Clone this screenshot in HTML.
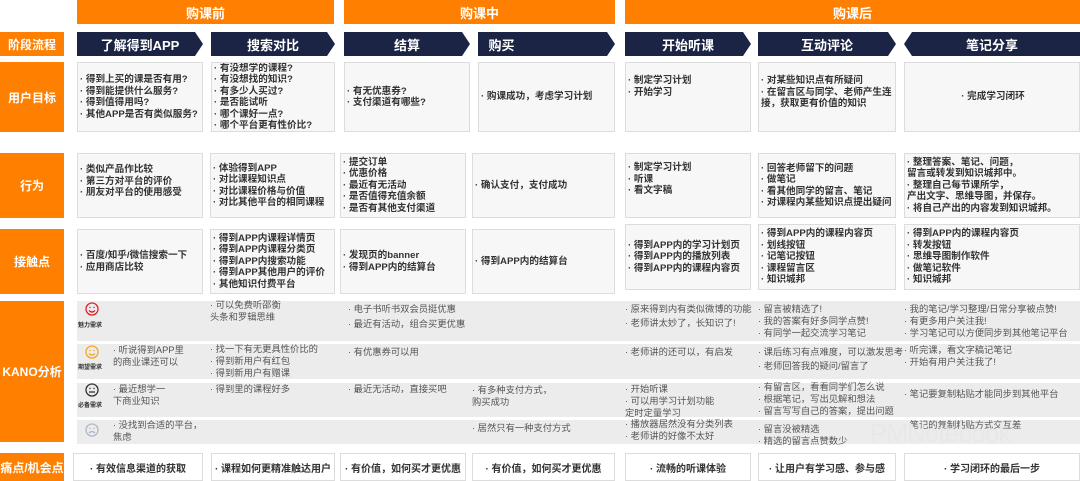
<!DOCTYPE html>
<html><head><meta charset="utf-8"><style>
*{margin:0;padding:0;box-sizing:border-box}
body{width:1080px;height:481px;background:#fff;position:relative;overflow:hidden;font-family:"Liberation Sans","Noto Sans CJK SC",sans-serif}
.a{position:absolute}
.top{background:#ff7f00;color:#fff;font-weight:bold;font-size:13px;display:flex;align-items:center;justify-content:center;top:0;height:24px}
.lab{background:#ff7f00;color:#fff;font-weight:bold;font-size:12px;display:flex;align-items:center;justify-content:center;left:0;width:64px;white-space:nowrap}
.st{background:#1b2444;color:#fff;font-weight:bold;font-size:13px;display:flex;align-items:center;justify-content:center;top:32px;height:24px;clip-path:polygon(0 0,calc(100% - 8px) 0,100% 50%,calc(100% - 8px) 100%,0 100%)}
.c{background:#f7f7f7;border:1px solid #dcdcdc;font-size:9.6px;font-weight:bold;color:#333;line-height:11.5px;display:flex;flex-direction:column;justify-content:center;padding-left:2px;white-space:nowrap;overflow:hidden}
.k{background:#ececec;left:77px;width:1003px}
.t{font-size:9.3px;color:#555;line-height:12px;white-space:nowrap}
.p{background:#fff;border:1px solid #dcdcdc;font-size:10px;font-weight:bold;color:#333;display:flex;align-items:center;justify-content:center;top:453px;height:28px;white-space:nowrap}
</style></head><body>
<div class="a top" style="left:77px;width:257px">购课前</div>
<div class="a top" style="left:344px;width:271px">购课中</div>
<div class="a top" style="left:625px;width:455px">购课后</div>

<div class="a lab" style="top:32px;height:24px">阶段流程</div>
<div class="a st" style="left:77px;width:126px">了解得到APP</div>
<div class="a st" style="left:211px;width:124px">搜索对比</div>
<div class="a st" style="left:344px;width:126px">结算</div>
<div class="a st" style="left:478px;width:137px;padding-right:90px">购买</div>
<div class="a st" style="left:625px;width:126px">开始听课</div>
<div class="a st" style="left:758px;width:138px">互动评论</div>
<div class="a st" style="left:904px;width:176px;clip-path:polygon(8px 0,100% 0,100% 100%,8px 100%,0 50%)">笔记分享</div>

<div class="a lab" style="top:62px;height:70px">用户目标</div>
<div class="a c" style="left:77px;top:62px;width:126px;height:70px">· 得到上买的课是否有用?<br>· 得到能提供什么服务?<br>· 得到值得用吗?<br>· 其他APP是否有类似服务?</div>
<div class="a c" style="left:211px;top:62px;width:124px;height:70px">· 有没想学的课程?<br>· 有没想找的知识?<br>· 有多少人买过?<br>· 是否能试听<br>· 哪个课好一点?<br>· 哪个平台更有性价比?</div>
<div class="a c" style="left:344px;top:62px;width:126px;height:70px">· 有无优惠券?<br>· 支付渠道有哪些?</div>
<div class="a c" style="left:478px;top:62px;width:137px;height:70px">· 购课成功，考虑学习计划</div>
<div class="a c" style="left:625px;top:62px;width:126px;height:70px;justify-content:flex-start;padding-top:12px">· 制定学习计划<br>· 开始学习</div>
<div class="a c" style="left:758px;top:62px;width:138px;height:70px;justify-content:flex-start;padding-top:12px">· 对某些知识点有所疑问<br>· 在留言区与同学、老师产生连<br>接，获取更有价值的知识</div>
<div class="a c" style="left:904px;top:62px;width:176px;height:70px;align-items:center">· 完成学习闭环</div>

<div class="a lab" style="top:153px;height:65px">行为</div>
<div class="a c" style="left:77px;top:153px;width:126px;height:65px;justify-content:flex-start;padding-top:10px">· 类似产品作比较<br>· 第三方对平台的评价<br>· 朋友对平台的使用感受</div>
<div class="a c" style="left:210px;top:153px;width:125px;height:65px">· 体验得到APP<br>· 对比课程知识点<br>· 对比课程价格与价值<br>· 对比其他平台的相同课程</div>
<div class="a c" style="left:340px;top:153px;width:126px;height:65px">· 提交订单<br>· 优惠价格<br>· 最近有无活动<br>· 是否值得充值余额<br>· 是否有其他支付渠道</div>
<div class="a c" style="left:472px;top:153px;width:143px;height:65px">· 确认支付，支付成功</div>
<div class="a c" style="left:625px;top:153px;width:126px;height:65px;justify-content:flex-start;padding-top:8px">· 制定学习计划<br>· 听课<br>· 看文字稿</div>
<div class="a c" style="left:758px;top:153px;width:138px;height:65px">· 回答老师留下的问题<br>· 做笔记<br>· 看其他同学的留言、笔记<br>· 对课程内某些知识点提出疑问</div>
<div class="a c" style="left:904px;top:153px;width:176px;height:65px">· 整理答案、笔记、问题，<br>留言或转发到知识城邦中。<br>· 整理自己每节课所学，<br>产出文字、思维导图，并保存。<br>· 将自己产出的内容发到知识城邦。</div>

<div class="a lab" style="top:229px;height:65px">接触点</div>
<div class="a c" style="left:77px;top:229px;width:126px;height:65px">· 百度/知乎/微信搜索一下<br>· 应用商店比较</div>
<div class="a c" style="left:210px;top:229px;width:125px;height:65px">· 得到APP内课程详情页<br>· 得到APP内课程分类页<br>· 得到APP内搜索功能<br>· 得到APP其他用户的评价<br>· 其他知识付费平台</div>
<div class="a c" style="left:340px;top:229px;width:126px;height:65px">· 发现页的banner<br>· 得到APP内的结算台</div>
<div class="a c" style="left:472px;top:229px;width:143px;height:65px">· 得到APP内的结算台</div>
<div class="a c" style="left:625px;top:224px;width:126px;height:66px">· 得到APP内的学习计划页<br>· 得到APP内的播放列表<br>· 得到APP内的课程内容页</div>
<div class="a c" style="left:758px;top:224px;width:138px;height:66px">· 得到APP内的课程内容页<br>· 划线按钮<br>· 记笔记按钮<br>· 课程留言区<br>· 知识城邦</div>
<div class="a c" style="left:904px;top:224px;width:176px;height:66px">· 得到APP内的课程内容页<br>· 转发按钮<br>· 思维导图制作软件<br>· 做笔记软件<br>· 知识城邦</div>

<div class="a lab" style="top:301px;height:141px">KANO分析</div>
<div class="a k" style="top:301px;height:40px"></div>
<div class="a k" style="top:344px;height:35px"></div>
<div class="a k" style="top:383px;height:34px"></div>
<div class="a k" style="top:420px;height:24px"></div>

<svg class="a" style="left:83px;top:301px" width="18" height="140" viewBox="0 0 18 140">
<g fill="none" stroke-width="1.3">
<circle cx="9" cy="8" r="6" stroke="#e0202a"/><path d="M6 9.5q3 3 6 0" stroke="#e0202a"/><circle cx="7" cy="6.5" r=".7" fill="#e0202a"/><circle cx="11" cy="6.5" r=".7" fill="#e0202a"/>
<circle cx="9" cy="51" r="6" stroke="#f5a623"/><path d="M6 52.5q3 3 6 0" stroke="#f5a623"/><circle cx="7" cy="49.5" r=".7" fill="#f5a623"/><circle cx="11" cy="49.5" r=".7" fill="#f5a623"/>
<circle cx="9" cy="89" r="6" stroke="#333"/><path d="M6 91h6" stroke="#333"/><circle cx="7" cy="87.5" r=".7" fill="#333"/><circle cx="11" cy="87.5" r=".7" fill="#333"/>
<circle cx="9" cy="129" r="6" stroke="#b0b8c8"/><path d="M6 132q3-3 6 0" stroke="#b0b8c8"/><circle cx="7" cy="127.5" r=".7" fill="#b0b8c8"/><circle cx="11" cy="127.5" r=".7" fill="#b0b8c8"/>
</g></svg>
<div class="a" style="left:78px;top:320px;font-size:6px;font-weight:bold;color:#333">魅力需求</div>
<div class="a" style="left:78px;top:362px;font-size:6px;font-weight:bold;color:#333">期望需求</div>
<div class="a" style="left:78px;top:400px;font-size:6px;font-weight:bold;color:#333">必备需求</div>

<div class="a t" style="left:210px;top:299px">· 可以免费听邵衡<br>头条和罗辑思维</div>
<div class="a t" style="left:348px;top:303px">· 电子书听书双会员挺优惠</div>
<div class="a t" style="left:348px;top:318px">· 最近有活动，组合买更优惠</div>
<div class="a t" style="left:625px;top:303px">· 原来得到内有类似微博的功能</div>
<div class="a t" style="left:625px;top:317px">· 老师讲太妙了，长知识了!</div>
<div class="a t" style="left:758px;top:303px">· 留言被精选了!<br>· 我的答案有好多同学点赞!<br>· 有同学一起交流学习笔记</div>
<div class="a t" style="left:904px;top:303px">· 我的笔记/学习整理/日常分享被点赞!<br>· 有更多用户关注我!<br>· 学习笔记可以方便同步到其他笔记平台</div>

<div class="a t" style="left:113px;top:344px">· 听说得到APP里<br>的商业课还可以</div>
<div class="a t" style="left:210px;top:343px">· 找一下有无更具性价比的<br>· 得到新用户有红包<br>· 得到新用户有赠课</div>
<div class="a t" style="left:348px;top:346px">· 有优惠券可以用</div>
<div class="a t" style="left:625px;top:346px">· 老师讲的还可以，有启发</div>
<div class="a t" style="left:758px;top:346px">· 课后练习有点难度，可以激发思考</div>
<div class="a t" style="left:758px;top:360px">· 老师回答我的疑问/留言了</div>
<div class="a t" style="left:904px;top:344px">· 听完课，看文字稿记笔记<br>· 开始有用户关注我了!</div>

<div class="a t" style="left:113px;top:383px">· 最近想学一<br>下商业知识</div>
<div class="a t" style="left:210px;top:383px">· 得到里的课程好多</div>
<div class="a t" style="left:348px;top:383px">· 最近无活动，直接买吧</div>
<div class="a t" style="left:472px;top:384px">· 有多种支付方式，<br>购买成功</div>
<div class="a t" style="left:625px;top:383px">· 开始听课<br>· 可以用学习计划功能<br>定时定量学习</div>
<div class="a t" style="left:758px;top:381px">· 有留言区，看看同学们怎么说<br>· 根据笔记，写出见解和想法<br>· 留言写写自己的答案，提出问题</div>
<div class="a t" style="left:904px;top:388px">· 笔记要复制粘贴才能同步到其他平台</div>

<div class="a t" style="left:113px;top:419px">· 没找到合适的平台，<br>焦虑</div>
<div class="a t" style="left:472px;top:422px">· 居然只有一种支付方式</div>
<div class="a t" style="left:625px;top:418px">· 播放器居然没有分类列表<br>· 老师讲的好像不太好</div>
<div class="a t" style="left:758px;top:423px">· 留言没被精选<br>· 精选的留言点赞数少</div>
<div class="a t" style="left:904px;top:419px">· 笔记的复制粘贴方式交互差</div>
<div class="a" style="left:870px;top:418px;font-size:26px;color:#e8e8e8;letter-spacing:-1px">PMNotebook</div>

<div class="a lab" style="top:453px;height:28px">痛点/机会点</div>
<div class="a p" style="left:73px;width:130px">· 有效信息渠道的获取</div>
<div class="a p" style="left:211px;width:124px">· 课程如何更精准触达用户</div>
<div class="a p" style="left:340px;width:126px">· 有价值，如何买才更优惠</div>
<div class="a p" style="left:472px;width:143px">· 有价值，如何买才更优惠</div>
<div class="a p" style="left:625px;width:126px">· 流畅的听课体验</div>
<div class="a p" style="left:758px;width:138px">· 让用户有学习感、参与感</div>
<div class="a p" style="left:904px;width:176px">· 学习闭环的最后一步</div>
</body></html>
